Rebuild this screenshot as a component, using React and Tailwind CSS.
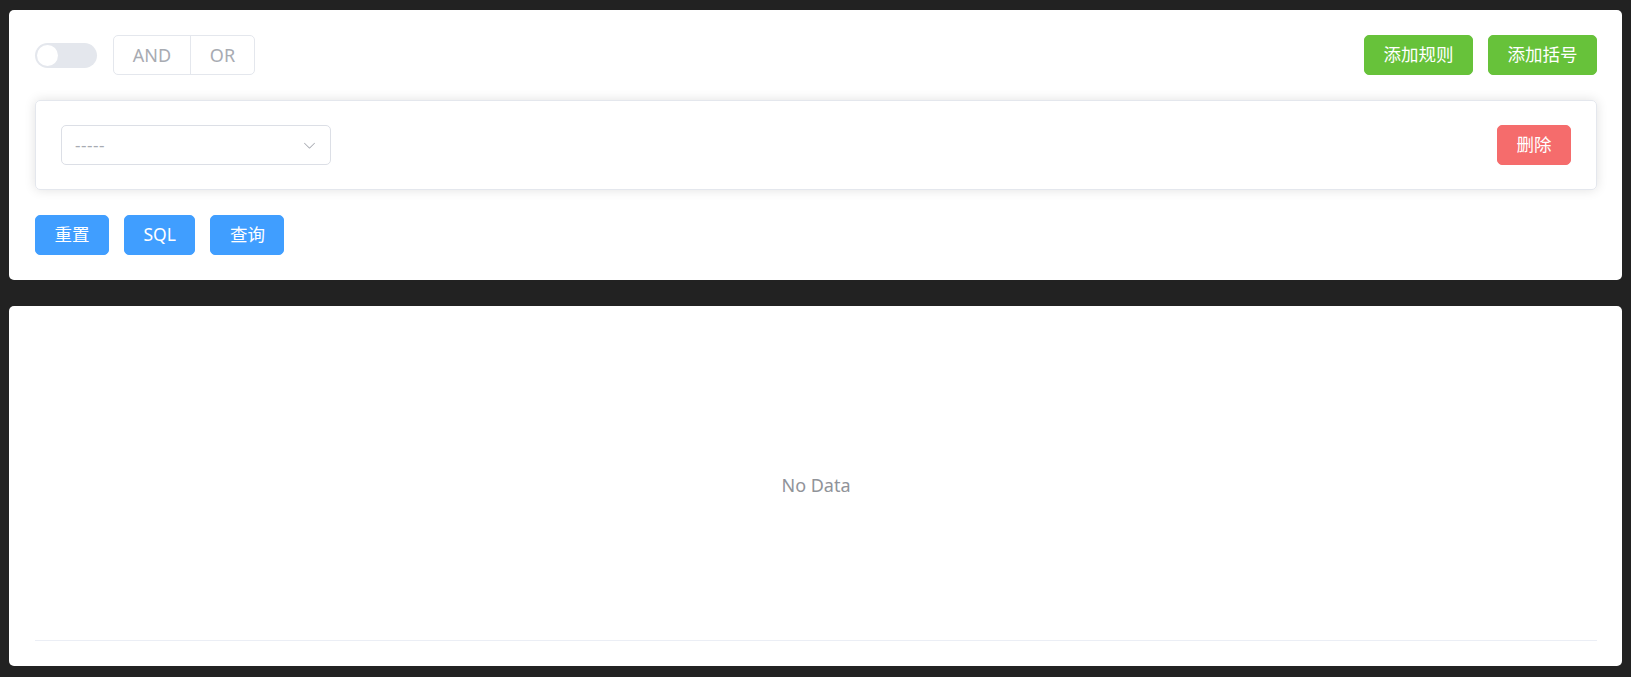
import React from "react";

const font = {
  fontFamily: '"Noto Sans", "Noto Sans CJK SC", sans-serif',
};

const Btn = ({ color, children, className = "" }) => (
  <button
    className={`h-10 rounded-[5px] border px-[18.5px] text-[17.5px] leading-none text-white ${color} ${className}`}
  >
    {children}
  </button>
);

const Chevron = () => (
  <svg width="15" height="15" viewBox="0 0 1024 1024" className="text-[#a8abb2]">
    <path
      fill="currentColor"
      d="M831.872 340.864 512 652.672 192.128 340.864a30.592 30.592 0 0 0-42.752 0 29.12 29.12 0 0 0 0 41.6L489.664 714.24a32 32 0 0 0 44.672 0l340.288-331.712a29.12 29.12 0 0 0 0-41.728 30.592 30.592 0 0 0-42.752 0z"
    />
  </svg>
);

const App = () => {
  return (
    <div className="h-[677px] bg-[#222222] px-[9px] pt-[10px]" style={font}>
      <div className="rounded-[5px] bg-white py-[25px] pl-[26px] pr-[25px]">
        <div className="flex h-10 items-center justify-between">
          <div className="flex items-center">
            <div className="flex h-[25px] w-[62px] items-center rounded-full bg-[#e4e7ed] px-[2px]">
              <div className="h-[21px] w-[21px] rounded-full bg-white"></div>
            </div>
            <div className="ml-4 flex h-10 rounded-[5px] border border-[#e4e7ed] text-[18px] text-[#a8abb2]">
              <div className="flex w-[77px] items-center justify-center border-r border-[#e4e7ed]">
                AND
              </div>
              <div className="flex w-[63px] items-center justify-center">OR</div>
            </div>
          </div>
          <div className="flex gap-[15px]">
            <Btn color="bg-[#67c23a] border-[#67c23a]">添加规则</Btn>
            <Btn color="bg-[#67c23a] border-[#67c23a]">添加括号</Btn>
          </div>
        </div>

        <div className="mt-[25px] flex h-[90px] items-center justify-between rounded-[5px] border border-[#e4e7ed] px-[25px] shadow-[0_0_12px_rgba(0,0,0,0.12)]">
          <div className="flex h-10 w-[270px] items-center justify-between rounded-[5px] border border-[#dcdfe6] pl-[13px] pr-[13px]">
            <span className="text-[17px] tracking-[0.5px] text-[#a8abb2]">-----</span>
            <Chevron />
          </div>
          <Btn color="bg-[#f56c6c] border-[#f56c6c]">删除</Btn>
        </div>

        <div className="mt-[25px] flex gap-[15px]">
          <Btn color="bg-[#409eff] border-[#409eff]">重置</Btn>
          <Btn color="bg-[#409eff] border-[#409eff]">SQL</Btn>
          <Btn color="bg-[#409eff] border-[#409eff]">查询</Btn>
        </div>
      </div>

      <div className="mt-[26px] rounded-[5px] bg-white py-[25px] pl-[26px] pr-[25px]">
        <div className="flex h-[310px] items-center justify-center border-b border-[#ebeef5] text-[18px] text-[#909399]">
          No Data
        </div>
      </div>
    </div>
  );
};

export default App;
